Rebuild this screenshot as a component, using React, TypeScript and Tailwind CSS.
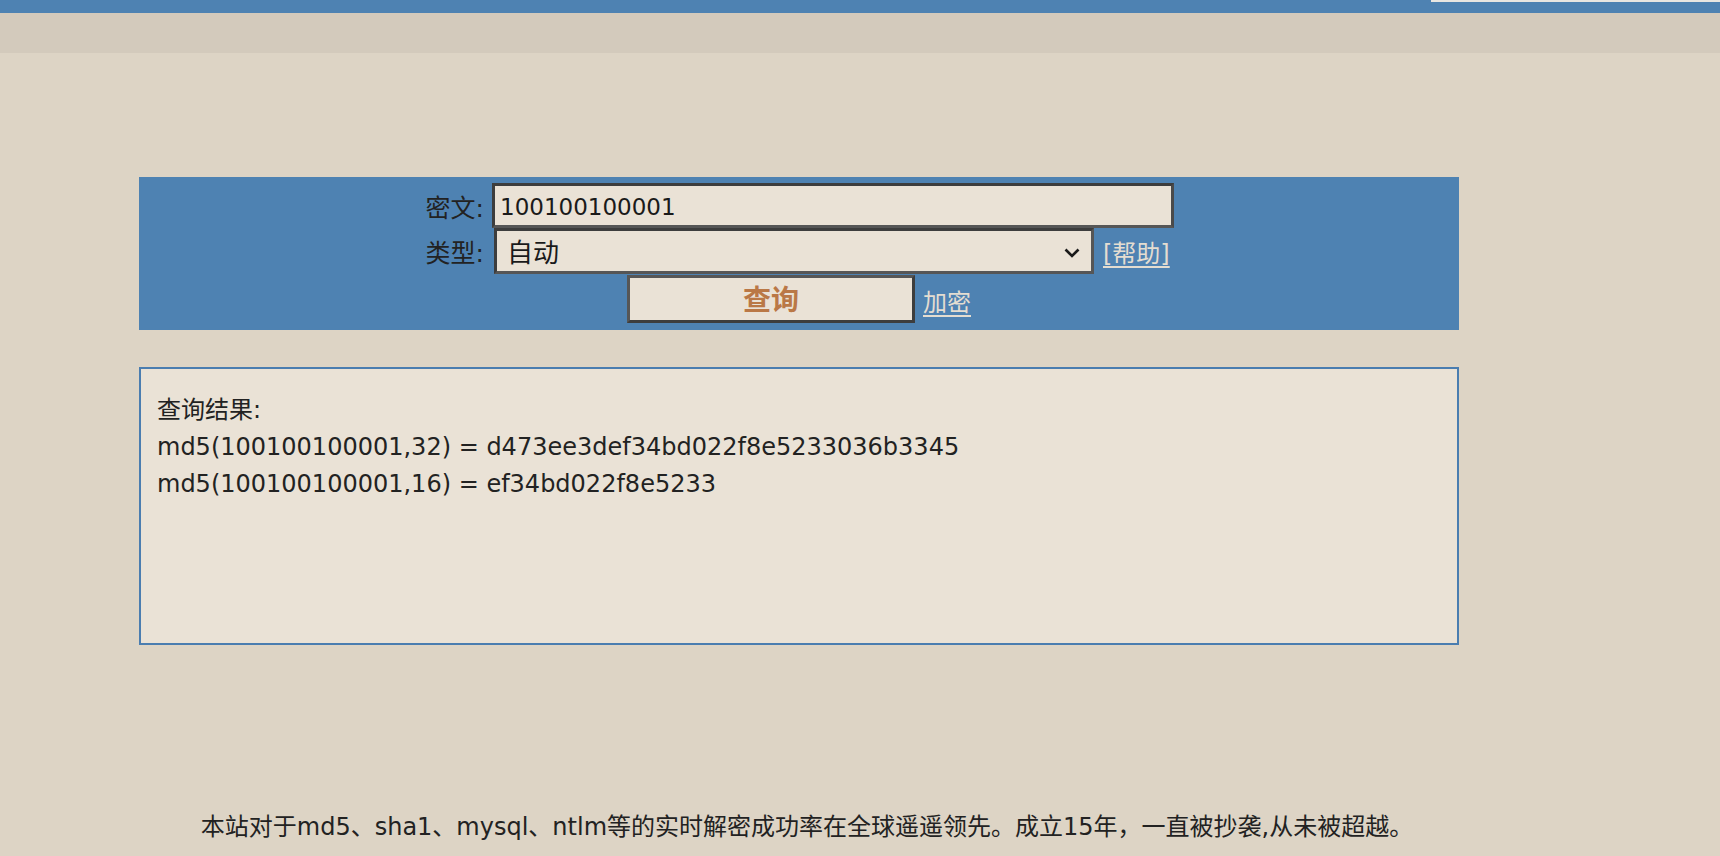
import React from "react";

export default function App() {
  return (
    <div className="min-h-[856px] bg-[#ddd4c5] font-['DejaVu_Sans','Noto_Sans_CJK_SC',sans-serif] text-[24px] text-[#222]">
      <div className="h-[13px] bg-[#4e82b2] flex justify-end">
        <div className="w-[289px] h-[2px] bg-[#e9e6e1]" />
      </div>
      <div className="h-[40px] bg-[#d3cabc]" />
      <div className="ml-[139px] w-[1320px] pt-[124px]">
        <div className="h-[153px] bg-[#4e82b2] pt-[6px]">
          <div className="flex items-center">
            <div className="w-[345px] text-right leading-[30px] pt-[6px] text-[25px]">密文:</div>
            <input
              readOnly
              value="100100100001"
              className="ml-[8px] w-[682px] h-[45px] bg-[#eae2d6] border-[3px] border-t-[#3d3d3d] border-l-[#3d3d3d] border-b-[#565656] border-r-[#4a4a4a] px-[5px] pt-[2px] text-[23px] text-[#1a1a1a] outline-none"
            />
          </div>
          <div className="flex items-center">
            <div className="w-[345px] text-right leading-[30px] pt-[6px] text-[25px]">类型:</div>
            <div className="ml-[10px] w-[600px] h-[46px] bg-[#eae2d6] border-[3px] border-t-[#3d3d3d] border-l-[#3d3d3d] border-b-[#565656] border-r-[#565656] pl-[10px] pr-[11px] pt-[5px] flex items-center justify-between text-[#1a1a1a]">
              <span className="text-[26px]">自动</span>
              <svg width="16" height="10" viewBox="0 0 16 10" className="mt-[-1px]">
                <polyline points="1.5,1.5 8,8 14.5,1.5" fill="none" stroke="#1a1a1a" strokeWidth="2.6" />
              </svg>
            </div>
            <a href="#" className="ml-[9px] text-[#e4ddd1] underline underline-offset-[4px] leading-[30px] mt-[6px]">
              [帮助]
            </a>
          </div>
          <div className="flex items-center mt-[1px]">
            <button className="ml-[488px] w-[288px] h-[48px] bg-[#eae2d6] border-[3px] border-t-[#565656] border-l-[#565656] border-b-[#3d3d3d] border-r-[#3d3d3d] pt-[4px] text-[28px] font-bold text-[#ba7846] leading-none">
              查询
            </button>
            <a href="#" className="ml-[8px] text-[#e4ddd1] underline underline-offset-[4px] leading-[30px] mt-[7px]">
              加密
            </a>
          </div>
        </div>
        <div className="mt-[37px] h-[278px] border-2 border-[#4a7db0] bg-[#eae2d6] pt-[23px] pl-[16px] leading-[37px]">
          <div>查询结果:</div>
          <div>md5(100100100001,32) = d473ee3def34bd022f8e5233036b3345</div>
          <div>md5(100100100001,16) = ef34bd022f8e5233</div>
        </div>
        <div className="mt-[164px] pl-[16px] text-center leading-[37px]">
          本站对于md5、sha1、mysql、ntlm等的实时解密成功率在全球遥遥领先。成立15年，一直被抄袭,从未被超越。
        </div>
      </div>
    </div>
  );
}
